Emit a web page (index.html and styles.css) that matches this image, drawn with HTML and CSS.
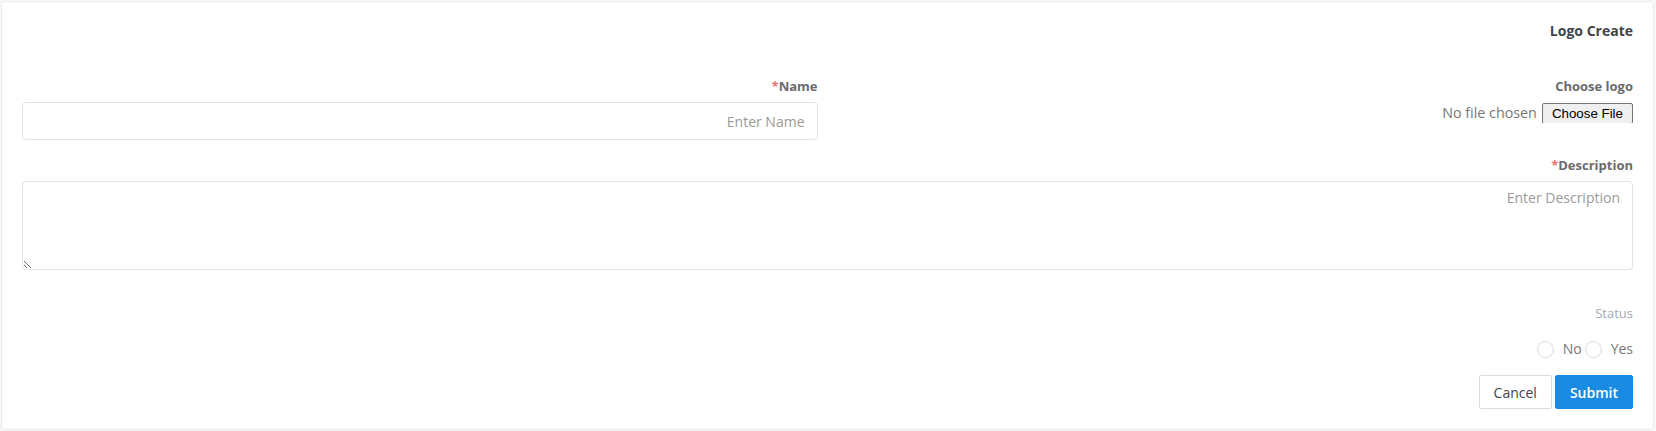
FILE: index.html
```html
<!DOCTYPE html>
<html lang="en" dir="rtl">
<head>
<meta charset="utf-8">
<title>Logo Create</title>
<link rel="stylesheet" href="styles.css">
</head>
<body>
<div class="card">
  <h2 class="title">Logo Create</h2>
  <div class="row">
    <div class="field">
      <label class="label">Choose logo</label>
      <input class="file" type="file">
    </div>
    <div class="field">
      <label class="label"><span class="req">*</span>Name</label>
      <input class="input" type="text" placeholder="Enter Name">
    </div>
  </div>
  <div class="field desc">
    <label class="label"><span class="req">*</span>Description</label>
    <textarea class="textarea" placeholder="Enter Description"></textarea>
  </div>
  <div class="status">
    <div class="status-label">Status</div>
    <div class="radios">
      <label class="opt"><input type="radio" name="status" class="radio"><span>No</span></label>
      <label class="opt"><input type="radio" name="status" class="radio"><span>Yes</span></label>
    </div>
  </div>
  <div class="actions">
    <button class="btn btn-primary" type="button">Submit</button>
    <button class="btn btn-default" type="button">Cancel</button>
  </div>
</div>
</body>
</html>
```
FILE: styles.css
```css
html, body {
  margin: 0;
  padding: 0;
  background: #f7f7f7;
}
body {
  padding: 1px 2px 1px 1px;
  font-family: "Open Sans", "Noto Sans", sans-serif;
  color: #555;
  box-sizing: border-box;
  height: 431px;
}
.card {
  background: #fff;
  border: 1px solid #ebebeb;
  border-radius: 4px;
  padding: 19px 20px 19px 20px;
  height: 429px;
  box-sizing: border-box;
}
.title {
  margin: 0;
  font-size: 14px;
  font-weight: 700;
  line-height: 20px;
  color: #444;
}
.row {
  display: grid;
  grid-template-columns: 1fr 1fr;
  column-gap: 20px;
  margin-top: 36px;
}
.field {
  display: flex;
  flex-direction: column;
  align-items: stretch;
}
.label {
  display: block;
  direction: ltr;
  text-align: right;
  font-size: 13px;
  font-weight: 700;
  line-height: 18px;
  color: #6b6b6b;
  margin-bottom: 7px;
}
.req {
  color: #f36f6f;
}
.file {
  font-family: "Open Sans", sans-serif;
  font-size: 14.3px;
  color: #777;
  align-self: flex-start;
  height: 21px;
  line-height: 21px;
}
.file::file-selector-button {
  font-family: "Liberation Sans", Arial, sans-serif;
  font-size: 13.33px;
  color: #000;
  background: #efefef;
  border: 1px solid #767676;
  border-radius: 2px;
  padding: 1px 9px;
  height: 21px;
  margin-inline-end: 5px;
}
.input {
  height: 38px;
  box-sizing: border-box;
  border: 1px solid #e2e2e2;
  border-radius: 4px;
  padding: 0 12px;
  font-family: "Open Sans", sans-serif;
  font-size: 14px;
  color: #555;
  outline: none;
}
.input::placeholder, .textarea::placeholder {
  color: #9a9a9a;
}
.desc {
  margin-top: 16px;
}
.textarea {
  height: 89px;
  box-sizing: border-box;
  border: 1px solid #e2e2e2;
  border-radius: 4px;
  padding: 6px 12px;
  font-family: "Open Sans", sans-serif;
  font-size: 14px;
  color: #555;
  outline: none;
  resize: vertical;
}
.status {
  margin-top: 34px;
}
.status-label {
  font-size: 13px;
  line-height: 18px;
  color: #a3aab2;
}
.radios {
  direction: ltr;
  display: flex;
  justify-content: flex-end;
  align-items: center;
  gap: 3px;
  margin-top: 17px;
  height: 20px;
}
.opt {
  display: flex;
  align-items: center;
  gap: 9px;
  font-size: 14px;
  color: #777;
  line-height: 20px;
}
.radio {
  appearance: none;
  -webkit-appearance: none;
  width: 17px;
  height: 17px;
  margin: 0;
  border: 1px solid #dadada;
  border-radius: 50%;
  background: #fff;
  box-sizing: border-box;
}
.actions {
  display: flex;
  gap: 3px;
  margin-top: 16px;
}
.btn {
  height: 34px;
  box-sizing: border-box;
  border-radius: 2px;
  font-family: "Open Sans", sans-serif;
  font-size: 14px;
  padding: 0 14px;
  cursor: pointer;
}
.btn-primary {
  background: #1b8ae3;
  border: 1px solid #1b8ae3;
  color: #fff;
  font-weight: 600;
}
.btn-default {
  background: #fff;
  border: 1px solid #dcdcdc;
  color: #444;
}
```
